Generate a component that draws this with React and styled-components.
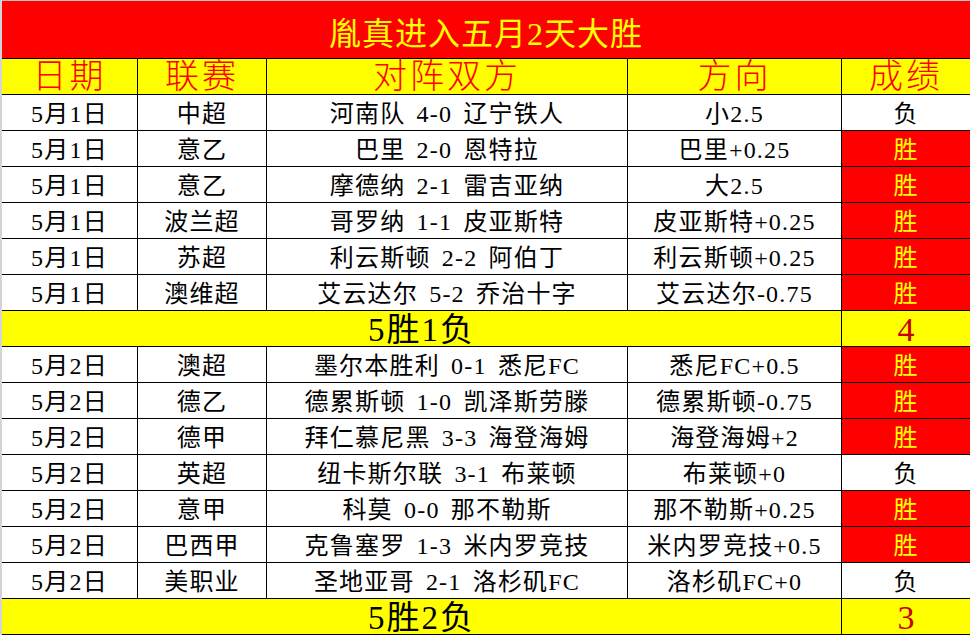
import React from 'react';
import styled, { createGlobalStyle } from 'styled-components';

const GlobalStyle = createGlobalStyle`
  html, body {
    margin: 0;
    padding: 0;
    background: #fff;
  }
`;

const Sheet = styled.div`
  width: 968px;
  height: 634px;
  border-top: 1px solid #c6c6c6;
  border-left: 2px solid #d4d4d4;
  background: #000;
  display: grid;
  grid-template-columns: 135px 128px 360px 213px 128px;
  grid-template-rows: 57px repeat(16, 35px);
  row-gap: 1px;
  column-gap: 1px;
  padding-bottom: 1px;
  font-family: "Liberation Serif", "Noto Sans CJK SC", serif;
  overflow: hidden;
`;

const Title = styled.div`
  grid-column: 1 / -1;
  background: #ff0000;
  color: #ffff00;
  font-size: 32px;
  letter-spacing: 1px;
  display: flex;
  align-items: center;
  justify-content: center;
  padding-top: 2px;
`;

const Head = styled.div`
  background: #ffff00;
  color: #ff0000;
  font-size: 34px;
  font-weight: 300;
  line-height: 1;
  display: flex;
  align-items: center;
  justify-content: center;
  letter-spacing: 3px;
`;

const Cell = styled.div`
  background: #fff;
  color: #000;
  font-size: 24px;
  line-height: 1;
  display: flex;
  align-items: center;
  justify-content: center;
  padding-top: 3px;
  white-space: pre;
  letter-spacing: 1.2px;
  word-spacing: 4px;
`;

const Result = styled(Cell)`
  background: ${props => (props.$win ? '#ff0000' : '#fff')};
  color: ${props => (props.$win ? '#ffff00' : '#000')};
`;

const SummaryText = styled.div`
  grid-column: 1 / 5;
  background: #ffff00;
  color: #000;
  font-size: 33px;
  line-height: 1;
  letter-spacing: 2px;
  display: flex;
  align-items: center;
  justify-content: center;
  padding-top: 4px;
`;

const SummaryCount = styled.div`
  background: #ffff00;
  color: #c80000;
  font-size: 34px;
  line-height: 1;
  display: flex;
  align-items: center;
  justify-content: center;
  padding-top: 3px;
`;

const sections = [
  {
    date: '5月1日',
    summary: '5胜1负',
    count: 4,
    games: [
      ['中超', '河南队 4-0 辽宁铁人', '小2.5', '负'],
      ['意乙', '巴里 2-0 恩特拉', '巴里+0.25', '胜'],
      ['意乙', '摩德纳 2-1 雷吉亚纳', '大2.5', '胜'],
      ['波兰超', '哥罗纳 1-1 皮亚斯特', '皮亚斯特+0.25', '胜'],
      ['苏超', '利云斯顿 2-2 阿伯丁', '利云斯顿+0.25', '胜'],
      ['澳维超', '艾云达尔 5-2 乔治十字', '艾云达尔-0.75', '胜'],
    ],
  },
  {
    date: '5月2日',
    summary: '5胜2负',
    count: 3,
    games: [
      ['澳超', '墨尔本胜利 0-1 悉尼FC', '悉尼FC+0.5', '胜'],
      ['德乙', '德累斯顿 1-0 凯泽斯劳滕', '德累斯顿-0.75', '胜'],
      ['德甲', '拜仁慕尼黑 3-3 海登海姆', '海登海姆+2', '胜'],
      ['英超', '纽卡斯尔联 3-1 布莱顿', '布莱顿+0', '负'],
      ['意甲', '科莫 0-0 那不勒斯', '那不勒斯+0.25', '胜'],
      ['巴西甲', '克鲁塞罗 1-3 米内罗竞技', '米内罗竞技+0.5', '胜'],
      ['美职业', '圣地亚哥 2-1 洛杉矶FC', '洛杉矶FC+0', '负'],
    ],
  },
];

const headers = ['日期', '联赛', '对阵双方', '方向', '成绩'];

const App = () => {
  return (
    <>
      <GlobalStyle />
      <Sheet>
        <Title>胤真进入五月2天大胜</Title>
        {headers.map(h => (
          <Head key={h}>{h}</Head>
        ))}
        {sections.map(section => (
          <React.Fragment key={section.date}>
            {section.games.map((g, i) => (
              <React.Fragment key={i}>
                <Cell>{section.date}</Cell>
                <Cell>{g[0]}</Cell>
                <Cell>{g[1]}</Cell>
                <Cell>{g[2]}</Cell>
                <Result $win={g[3] === '胜'}>{g[3]}</Result>
              </React.Fragment>
            ))}
            <SummaryText>{section.summary}</SummaryText>
            <SummaryCount>{section.count}</SummaryCount>
          </React.Fragment>
        ))}
      </Sheet>
    </>
  );
};

export default App;
